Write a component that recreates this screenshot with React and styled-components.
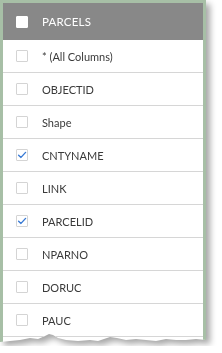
import React from "react";
import styled, { createGlobalStyle } from "styled-components";

const Global = createGlobalStyle`
  html, body { margin: 0; padding: 0; background: #ffffff; }
  body { font-family: "Lato", "Open Sans", sans-serif; }
`;

const Shadow = styled.div`
  width: 206px;
  filter: drop-shadow(4px 4px 3px rgba(0, 0, 0, 0.35));
`;

const Frame = styled.div`
  width: 206px;
  height: 346px;
  box-sizing: border-box;
  border: 3px solid #a7bfa6;
  border-bottom: none;
  background: #ffffff;
  overflow: hidden;
  clip-path: polygon(
    0 0, 206px 0, 206px 340px, 196px 339px, 186px 340px, 176px 340px,
    166px 339px, 156px 341px, 146px 340px, 136px 339px, 126px 340px,
    117px 338px, 110px 337px, 104px 339px, 98px 341px, 90px 340px,
    78px 341px, 66px 340px, 58px 338px, 53px 335px, 49px 334px,
    45px 336px, 38px 339px, 30px 338px, 20px 340px, 10px 341px, 0 342px
  );
`;

const Header = styled.div`
  display: flex;
  align-items: center;
  height: 37px;
  background: #888888;
  padding-left: 13px;
  gap: 14px;
  color: #ffffff;
  font-size: 11.5px;
  letter-spacing: 0.2px;
`;

const Row = styled.div`
  display: flex;
  align-items: center;
  height: 32px;
  border-bottom: 1px solid #d6d6d6;
  padding-left: 13px;
  gap: 14px;
  color: #3a3a3a;
  font-size: 11px;
`;

const Box = styled.span`
  width: 12px;
  height: 12px;
  box-sizing: border-box;
  flex: none;
  display: flex;
  align-items: center;
  justify-content: center;
  border: 1px solid ${(p) => (p.$header ? "#ffffff" : "#d4d4d4")};
  background: #ffffff;
  border-radius: 1px;
`;

const Check = () => (
  <svg width="10" height="10" viewBox="0 0 10 10">
    <path d="M1.6 5.2 L4 7.4 L8.6 2.4" fill="none" stroke="#3a7bd5" strokeWidth="1.4" strokeLinecap="round" strokeLinejoin="round" />
  </svg>
);

const fields = [
  ["* (All Columns)", false],
  ["OBJECTID", false],
  ["Shape", false],
  ["CNTYNAME", true],
  ["LINK", false],
  ["PARCELID", true],
  ["NPARNO", false],
  ["DORUC", false],
  ["PAUC", false],
  ["", false],
];

export default function App() {
  return (
    <>
      <Global />
      <Shadow>
        <Frame>
          <Header>
            <Box $header />
            <span>PARCELS</span>
          </Header>
          {fields.map(([name, checked], i) => (
            <Row key={i}>
              <Box>{checked && <Check />}</Box>
              <span>{name}</span>
            </Row>
          ))}
        </Frame>
      </Shadow>
    </>
  );
}
